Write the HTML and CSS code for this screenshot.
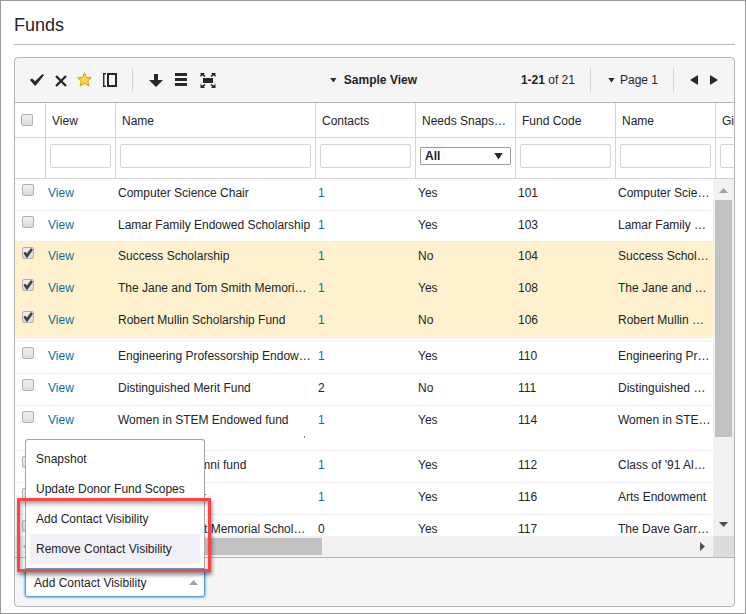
FILE: index.html
```html
<!DOCTYPE html>
<html lang="en">
<head>
<meta charset="utf-8">
<title>Funds</title>
<link rel="stylesheet" href="styles.css">
</head>
<body>
<main class="page">
  <h1 class="title">Funds</h1>
  <section class="panel" aria-label="Funds list">
    <div class="toolbar">
      <div class="tools">
        <button class="tool" type="button" aria-label="Apply"><svg width="16" height="16" viewBox="0 0 16 16"><path d="M0 8L2 6.200 5 9.200 12.500 2 14 3.300 5.800 13.500 4.600 13.500z" fill="#28292c"/></svg></button>
        <button class="tool" type="button" aria-label="Clear"><svg width="16" height="16" viewBox="0 0 16 16"><path d="M2 4L12 14M12 4L2 14" stroke="#28292c" stroke-width="2.400"/></svg></button>
        <button class="tool" type="button" aria-label="Favorite"><svg width="16" height="16" viewBox="0 0 16 16"><path d="M6.500 .8L8.500 5.500 13.200 5.800 9.700 9 11 14 6.500 11.300 2 14 3.300 9 -.2 5.800 4.500 5.500z" fill="#ffd43c" stroke="#d0a01c" overflow="visible"/></svg></button>
        <button class="tool" type="button" aria-label="Columns"><svg width="16" height="16" viewBox="0 0 16 16"><path d="M4 1.700H1.700V14.300H4" fill="none" stroke="#28292c" stroke-width="1.400"/><path d="M6 2H14V14H6z" fill="none" stroke="#28292c" stroke-width="2"/></svg></button>
      </div>
      <div class="tools tools-more">
        <button class="tool" type="button" aria-label="Download"><svg width="16" height="16" viewBox="0 0 16 16"><path d="M6 2H10V8H15L8 15 1 8H6z" fill="#28292c"/></svg></button>
        <button class="tool" type="button" aria-label="Row density"><svg width="16" height="16" viewBox="0 0 16 16"><path d="M1 1H13V4H1zM1 6H13V9H1zM1 11H13V14H1z" fill="#28292c"/></svg></button>
        <button class="tool" type="button" aria-label="Expand"><svg width="16" height="16" viewBox="0 0 16 16"><path d="M3 6H13V11H3zM.5 1H5L3.800 2.300 5.500 4 4.500 5 2.500 3.500 .5 5zM15.500 1H11L12.200 2.300 10.500 4 11.500 5 13.500 3.500 15.500 5zM.5 16H5L3.800 14.700 5.500 13 4.500 12 2.500 13.500 .5 12zM15.500 16H11L12.200 14.700 10.500 13 11.500 12 13.500 13.500 15.500 12z" fill="#28292c"/></svg></button>
      </div>
      <button class="view-name" type="button"><i class="tri down"></i>Sample View</button>
      <div class="pager">
        <span class="count"><b>1-21</b> of 21</span>
        <button class="page-pick" type="button"><i class="tri down"></i>Page 1</button>
        <div class="steps">
          <button type="button" aria-label="Previous page"><i class="tri left big"></i></button>
          <button type="button" aria-label="Next page"><i class="tri right big"></i></button>
        </div>
      </div>
    </div>
    <div class="head">
      <table>
        <colgroup><col class="c-check"><col class="c-view"><col class="c-name"><col><col><col><col><col></colgroup>
        <tr class="labels"><th><input type="checkbox" aria-label="Select all"></th><th>View</th><th>Name</th><th>Contacts</th><th>Needs Snapshot</th><th>Fund Code</th><th>Name</th><th>Gift Date</th></tr>
        <tr class="filters"><td></td><td><input type="text" aria-label="Filter view"></td><td><input type="text" aria-label="Filter name"></td><td><input type="text" aria-label="Filter contacts"></td><td><span class="pick"><select aria-label="Filter needs snapshot"><option>All</option></select><i class="tri down big"></i></span></td><td><input type="text" aria-label="Filter fund code"></td><td><input type="text" aria-label="Filter fund name"></td><td><input type="text" aria-label="Filter gift date"></td></tr>
      </table>
    </div>
    <div class="body">
      <div class="rows">
        <table>
          <colgroup><col class="c-check"><col class="c-view"><col class="c-name"><col><col><col><col></colgroup>
          <tr><td><input type="checkbox" aria-label="Select 101"></td><td><a href="#">View</a></td><td>Computer Science Chair</td><td><a href="#">1</a></td><td>Yes</td><td>101</td><td>Computer Science Chair</td></tr>
          <tr class="short"><td><input type="checkbox" aria-label="Select 103"></td><td><a href="#">View</a></td><td>Lamar Family Endowed Scholarship</td><td><a href="#">1</a></td><td>Yes</td><td>103</td><td>Lamar Family Endowed</td></tr>
          <tr class="picked"><td><input type="checkbox" checked aria-label="Select 104"></td><td><a href="#">View</a></td><td>Success Scholarship</td><td><a href="#">1</a></td><td>No</td><td>104</td><td>Success Scholarship</td></tr>
          <tr class="picked"><td><input type="checkbox" checked aria-label="Select 108"></td><td><a href="#">View</a></td><td>The Jane and Tom Smith Memorial Fund</td><td><a href="#">1</a></td><td>Yes</td><td>108</td><td>The Jane and Tom</td></tr>
          <tr class="picked"><td><input type="checkbox" checked aria-label="Select 106"></td><td><a href="#">View</a></td><td>Robert Mullin Scholarship Fund</td><td><a href="#">1</a></td><td>No</td><td>106</td><td>Robert Mullin Scholarship</td></tr>
          <tr class="gap"><td colspan="7"></td></tr>
          <tr><td><input type="checkbox" aria-label="Select 110"></td><td><a href="#">View</a></td><td>Engineering Professorship Endowment</td><td><a href="#">1</a></td><td>Yes</td><td>110</td><td>Engineering Professorship</td></tr>
          <tr><td><input type="checkbox" aria-label="Select 111"></td><td><a href="#">View</a></td><td>Distinguished Merit Fund</td><td>2</td><td>No</td><td>111</td><td>Distinguished Merit</td></tr>
          <tr class="tall"><td><input type="checkbox" aria-label="Select 114"></td><td><a href="#">View</a></td><td>Women in STEM Endowed fund<i class="mark"></i></td><td><a href="#">1</a></td><td>Yes</td><td>114</td><td>Women in STEM Endowed</td></tr>
          <tr><td><input type="checkbox" aria-label="Select 112"></td><td><a href="#">View</a></td><td>Class of '91 Alumni fund</td><td><a href="#">1</a></td><td>Yes</td><td>112</td><td>Class of '91 Alumni fund</td></tr>
          <tr><td><input type="checkbox" aria-label="Select 116"></td><td><a href="#">View</a></td><td>Arts Endowment</td><td><a href="#">1</a></td><td>Yes</td><td>116</td><td>Arts Endowment</td></tr>
          <tr><td><input type="checkbox" aria-label="Select 117"></td><td><a href="#">View</a></td><td>The Dave Garret Memorial Scholarship</td><td>0</td><td>Yes</td><td>117</td><td>The Dave Garret Memorial</td></tr>
        </table>
      </div>
      <div class="vbar"><i class="tri up big dim"></i><div class="vthumb"></div><i class="tri down big grey"></i></div>
      <div class="hbar"><i class="tri left big dim"></i><div class="hthumb"></div><i class="tri right big grey"></i></div>
      <div class="corner"></div>
    </div>
    <div class="footer">
      <div class="action">
        <select class="action-select" aria-label="Action"><option>Add Contact Visibility</option></select>
        <i class="tri up big dim action-arrow"></i>
        <ul class="menu">
          <li>Snapshot</li>
          <li>Update Donor Fund Scopes</li>
          <li>Add Contact Visibility</li>
          <li class="active">Remove Contact Visibility</li>
        </ul>
        <div class="callout"></div>
      </div>
    </div>
  </section>
</main>
</body>
</html>
```
FILE: styles.css
```css
* { box-sizing: border-box; }
body { margin: 0; font: 12px/16px "Liberation Sans", Arial, sans-serif; color: #222428; background: #fff; }
button, input, select { font: inherit; color: inherit; margin: 0; }
button { border: 0; padding: 0; background: none; }
.page { min-height: 100vh; border: 1px solid #999; padding: 12px 10px 6px 13px; display: flex; flex-direction: column; }
.title { margin: 0 0 12px; padding-bottom: 7px; font-size: 18px; line-height: 24px; font-weight: 400; border-bottom: 1px solid #b5b5b5; }
.panel { border: 1px solid #b5b5b5; border-radius: 4px; background: #f5f5f5; flex: 1; display: flex; flex-direction: column; }

.toolbar { display: flex; height: 45px; align-items: center; border-bottom: 1px solid #b5b5b5; }
.tools { display: flex; gap: 8px; padding: 0 14px 0 15px; height: 24px; align-items: center; }
.tools-more { border-left: 1px solid #d4d4d4; padding: 0 0 0 15px; gap: 10px; }
.tool, .tool svg { display: block; width: 16px; height: 16px; overflow: visible; }
.view-name { flex: 1; font-weight: 700; display: flex; align-items: center; justify-content: center; gap: 7px; padding-left: 10px; }
.pager { display: flex; align-items: center; padding-right: 16px; }
.count { padding-right: 15px; }
.page-pick { display: flex; align-items: center; gap: 5px; height: 24px; padding: 0 15px 0 17px; border: solid #d4d4d4; border-width: 0 1px; }
.steps { display: flex; gap: 12px; padding-left: 16px; }

.tri { display: block; flex: none; width: 7px; height: 5px; background: #28292c; }
.tri.big { width: 9px; height: 5px; }
.tri.left, .tri.right { width: 5px; height: 9px; }
.steps .tri { width: 8px; height: 10px; }
.tri.down { clip-path: polygon(0 0, 100% 0, 50% 100%); }
.tri.up { clip-path: polygon(50% 0, 100% 100%, 0 100%); }
.tri.left { clip-path: polygon(0 50%, 100% 0, 100% 100%); }
.tri.right { clip-path: polygon(0 0, 100% 50%, 0 100%); }
.tri.dim { background: #a0a0a0; }
.tri.grey { background: #505050; }

table { border-collapse: separate; border-spacing: 0; table-layout: fixed; width: 801px; }
.c-check { width: 31px; }
.c-view { width: 70px; }
.c-name { width: 200px; }
th, td { padding: 0; text-align: left; font-weight: 400; white-space: nowrap; overflow: hidden; text-overflow: ellipsis; }
.head { overflow: hidden; background: #fff; }
.head th, .head td { border: solid #d4d4d4; border-width: 0 1px 1px 0; }
.labels th { height: 35px; padding: 2px 8px 0 6px; }
.labels th:first-child { padding-top: 0; }
.filters td { height: 41px; padding: 0 4px 4px; }
input[type="text"] { display: block; width: 100%; height: 24px; border: 1px solid #d4d4d4; border-radius: 2px; background: #fff; }
.pick { display: flex; align-items: center; position: relative; }
.pick select { appearance: none; width: 100%; height: 18px; line-height: 16px; padding: 0 4px; font-weight: 700; border: 1px solid #999; border-radius: 1px; background: #fff; }
.pick .tri { position: absolute; right: 8px; height: 7px; pointer-events: none; }

input[type="checkbox"] { appearance: none; display: block; width: 12px; height: 12px; border: 1px solid #b0b0b0; border-radius: 2px; background: linear-gradient(#eee, #dcdcdc); }
input[type="checkbox"]:checked::before { content: ""; display: block; height: 10px; background: #404040; clip-path: polygon(5% 50%, 22% 38%, 40% 55%, 80% 0, 100% 18%, 45% 95%, 32% 95%); }

.body { display: grid; grid-template: 357px 21px / minmax(0, 1fr) 21px; background: #fff; }
.rows { overflow: hidden; }
.rows table { width: 701px; }
.rows td { height: 32px; padding: 6px 4px 9px 2px; vertical-align: top; border-bottom: 1px solid #eee; }
.rows td:first-child { padding: 5px 0 0 7px; }
.rows .short td { height: 31px; padding-bottom: 8px; }
.rows .gap td { height: 4px; padding: 0; }
.rows .tall td { height: 45px; }
.rows .picked { background: #fff1cd; }
.mark { display: block; width: 1px; height: 2px; margin: 8px 0 0 186px; background: #428bb5; }
a { color: #05729a; text-decoration: none; }
.vbar { background: #f1f1f1; display: flex; flex-direction: column; align-items: center; padding: 9px 0; }
.vthumb { width: 17px; height: 237px; margin: 7px 0 auto; background: #c1c1c1; }
.hbar { background: #f1f1f1; display: flex; align-items: center; padding: 0 8px; }
.hthumb { width: 287px; height: 17px; margin: 0 auto 0 7px; background: #c1c1c1; }
.corner { background: #dcdcdc; }

.footer { flex: 1; border-top: 1px solid #b5b5b5; padding: 10px 10px 8px; }
.action { position: relative; width: 180px; }
.action-select { appearance: none; display: block; width: 100%; height: 29px; padding: 0 8px; border: 1px solid #5c9fd6; border-radius: 3px; background: #fff; box-shadow: 0 0 2px 1px #7cbcf5; }
.action-arrow { position: absolute; right: 7px; top: 12px; pointer-events: none; }
.menu { position: absolute; left: 0; bottom: 28px; width: 100%; margin: 0; padding: 4px; list-style: none; background: #fff; border: 1px solid #a5a5a5; border-bottom-color: #5c9fd6; border-radius: 3px 3px 0 0; }
.menu li { padding: 7px 6px; }
.menu .active { background: #f2f0f7; }
.callout { position: absolute; left: -8px; right: -6px; bottom: 25px; height: 74px; border: 3px solid #fb4444; box-shadow: 1px 3px 4px rgba(0,0,0,.45), inset 1px 3px 4px rgba(0,0,0,.35); pointer-events: none; }
```
